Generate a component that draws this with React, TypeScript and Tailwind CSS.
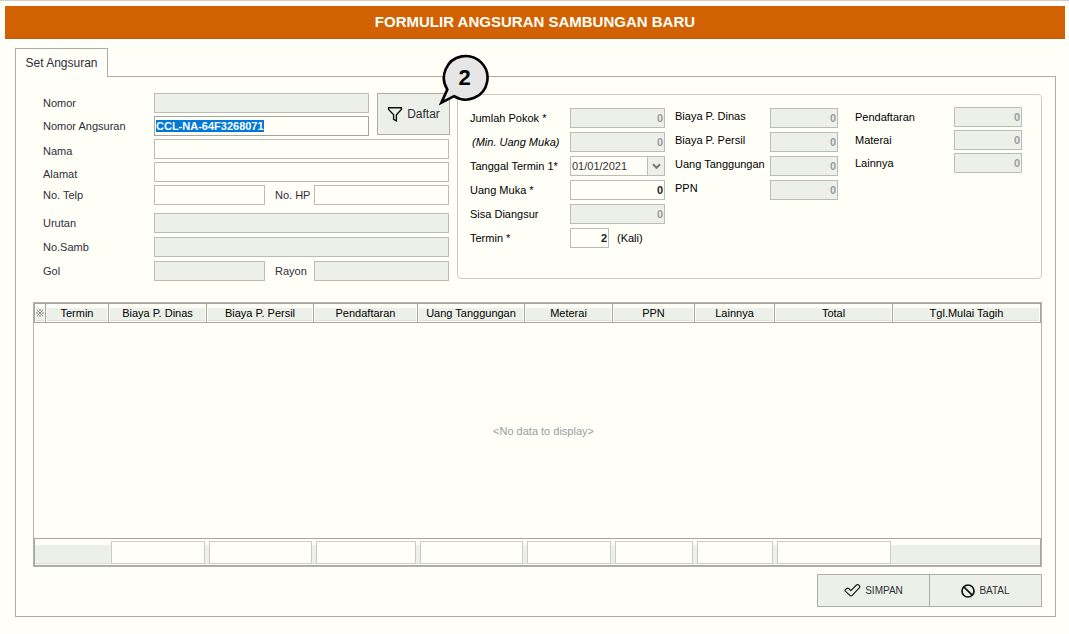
import { useEffect, useRef } from "react";
import type { ReactNode } from "react";
import clsx from "clsx";

const BOX = "block h-5 w-full min-w-0 rounded-none border px-px text-[11px] leading-4 font-bold outline-none";
const OPEN = "border-[#b9bdb5] bg-[#fffff8] text-[#222]";
const LOCKED = "border-[#b9bdb5] bg-[#edf0e8] text-[#9c9aa4]";

type FieldProps = {
  id: string;
  label: ReactNode;
  value?: string;
  locked?: boolean;
  numeric?: boolean;
  labelClass?: string;
  boxClass?: string;
};

function Field({ id, label, value = "", locked, numeric, labelClass, boxClass }: FieldProps) {
  return (
    <>
      <label htmlFor={id} className={clsx("whitespace-nowrap", labelClass ?? "self-center")}>
        {label}
      </label>
      <input
        id={id}
        type="text"
        defaultValue={value}
        disabled={locked}
        className={clsx(BOX, locked ? LOCKED : OPEN, numeric && "text-right", boxClass)}
      />
    </>
  );
}

function FunnelIcon() {
  return (
    <svg width="16" height="16" viewBox="0 0 16 16" fill="none" stroke="#111" strokeWidth="1.4" strokeLinejoin="miter" aria-hidden="true">
      <path d="M1 1.7h14M1.6 2v1.4l5 5.3v4.6l2.8 1.5V8.7l5-5.3V2" />
    </svg>
  );
}

function CheckIcon() {
  return (
    <svg width="17" height="15" viewBox="0 0 17 15" fill="none" stroke="#111" strokeWidth="1.1" strokeLinejoin="round" aria-hidden="true">
      <path d="M1.3 6.7 2.7 5.5a1.5 1.5 0 0 1 2 0L6.8 7.6 12.5 2a1.7 1.7 0 0 1 2.2 0l.8.8a1.2 1.2 0 0 1 0 1.8L8.2 12.3a1.7 1.7 0 0 1-2.3 0L1.3 8.2a1 1 0 0 1 0-1.5Z" />
    </svg>
  );
}

function BanIcon() {
  return (
    <svg width="14" height="14" viewBox="0 0 14 14" fill="none" stroke="#111" strokeWidth="1.7" aria-hidden="true">
      <circle cx="7" cy="7" r="6" />
      <path d="M2.8 2.8l8.4 8.4" />
    </svg>
  );
}

function Callout({ children }: { children: ReactNode }) {
  return (
    <span className="pointer-events-none absolute -top-10 left-[61px] block h-[53px] w-[53px]">
      <svg width="53" height="53" viewBox="0 0 53 53" fill="#e6e6e6" stroke="#000" strokeWidth="2.6" aria-hidden="true">
        <path d="M9.3 36.5A21.8 21.8 0 1 1 16 43.2L3.4 49.6Z" />
      </svg>
      <span className="absolute inset-x-0 top-0 flex h-[50px] items-center justify-center text-[22px] font-bold text-black">
        {children}
      </span>
    </span>
  );
}

const COLUMNS = [
  { name: "Termin", width: "w-[63px]", sum: false },
  { name: "Biaya P. Dinas", width: "w-[98px]", sum: true },
  { name: "Biaya P. Persil", width: "w-[107px]", sum: true },
  { name: "Pendaftaran", width: "w-[104px]", sum: true },
  { name: "Uang Tanggungan", width: "w-[107px]", sum: true },
  { name: "Meterai", width: "w-[88px]", sum: true },
  { name: "PPN", width: "w-[82px]", sum: true },
  { name: "Lainnya", width: "w-[80px]", sum: true },
  { name: "Total", width: "w-[118px]", sum: true },
  { name: "Tgl.Mulai Tagih", width: "", sum: false },
];

const HEAD_CELL =
  "flex h-[17px] items-center justify-center bg-[linear-gradient(to_bottom,#fffff8_4px,#edf0e8_4px,#edf0e8_calc(100%-1px),#dcdfd6_calc(100%-1px))]";

function InstallmentTable() {
  return (
    <table className="mt-[21px] w-full table-fixed border-separate border-spacing-0 border border-[#b0b4ac] text-[11px] leading-4 text-black">
      <colgroup>
        <col className="w-3" />
        {COLUMNS.map((c) => (
          <col key={c.name} className={c.width} />
        ))}
      </colgroup>
      <thead>
        <tr>
          <th className="border-y border-r border-l border-[#a3a79f] p-px pt-0">
            <div className={HEAD_CELL}>
              <svg width="8" height="8" viewBox="0 0 8 8" stroke="#777" strokeWidth="0.9" aria-hidden="true">
                <path d="M1 1l6 6M7 1L1 7M4 0v2M4 6v2M0 4h2M6 4h2" />
              </svg>
            </div>
          </th>
          {COLUMNS.map((c) => (
            <th key={c.name} scope="col" className="border-y border-r border-[#a3a79f] p-px pt-0 font-normal whitespace-nowrap">
              <div className={HEAD_CELL}>{c.name}</div>
            </th>
          ))}
        </tr>
      </thead>
      <tbody>
        <tr>
          <td className="p-0" />
          <td colSpan={10} className="h-[215px] p-0 text-center text-[#9b9ba0]">
            &lt;No data to display&gt;
          </td>
        </tr>
      </tbody>
      <tfoot>
        <tr className="bg-[linear-gradient(to_bottom,#fffff8_7px,#edf0e8_7px,#edf0e8_25px,#dcdfd6_25px,#dcdfd6_26px,#fffff8_26px)]">
          <td className="border-y border-l border-[#a3a79f] p-0" />
          {COLUMNS.map((c, i) => (
            <td
              key={c.name}
              className={clsx("h-7 border-y border-[#a3a79f] p-0 px-0.5", i === COLUMNS.length - 1 && "border-r")}
            >
              {c.sum && <div className="h-[23px] border border-[#c9cdc5] bg-[#fffff8]" />}
            </td>
          ))}
        </tr>
      </tfoot>
    </table>
  );
}

export default function App() {
  const codeRef = useRef<HTMLInputElement>(null);

  useEffect(() => {
    codeRef.current?.focus();
    codeRef.current?.select();
  }, []);

  return (
    <main className="min-h-screen border-t border-[#ccd0c8] bg-[#fffff8] pt-[5px] pb-[17px] font-['Liberation_Sans',Arial,sans-serif] text-[11px] leading-4 text-[#2e2e38]">
      <header className="mr-1 ml-[5px] flex h-[33px] items-center justify-center border-b border-[#b85c14] bg-[#d26103]">
        <h1 className="text-[15px] leading-5 font-bold text-[#fffff8]">FORMULIR ANGSURAN SAMBUNGAN BARU</h1>
      </header>

      <div className="mt-[9px] mr-[13px] ml-[15px]">
        <div role="tablist" className="flex">
          <button
            type="button"
            role="tab"
            aria-selected="true"
            className="relative -mb-px flex h-[29px] w-[93px] items-center justify-center border-x border-t border-[#a9ada5] bg-[#fffff8] text-xs"
          >
            Set Angsuran
          </button>
        </div>

        <form className="border border-[#a9ada5] pt-4 pr-[13px] pb-[9px] pl-[17px]" onSubmit={(e) => e.preventDefault()}>
          <div className="flex items-start gap-2">
            <div className="w-[416px] shrink-0 pl-[10px]">
              <div className="flex gap-2">
                <div className="grid grid-cols-[111px_215px] gap-y-[3px]">
                  <Field id="nomor" label="Nomor" locked />
                  <label htmlFor="nomor-angsuran" className="self-center">
                    Nomor Angsuran
                  </label>
                  <input
                    id="nomor-angsuran"
                    ref={codeRef}
                    type="text"
                    defaultValue="CCL-NA-64F3268071"
                    className="block h-5 w-full rounded-none border border-[#a3a79f] bg-[#fffff8] px-px text-[11px] leading-4 font-bold outline-none selection:bg-[#0078d7] selection:text-white"
                  />
                </div>
                <div className="relative">
                  <button
                    type="button"
                    className="flex h-[42px] w-[73px] items-center justify-center gap-1 border border-[#a9ada5] bg-[#edf0e8] text-xs"
                  >
                    <FunnelIcon />
                    Daftar
                  </button>
                  <Callout>2</Callout>
                </div>
              </div>

              <div className="mt-[3px] grid grid-cols-[111px_295px] gap-y-[3px]">
                <Field id="nama" label="Nama" labelClass="self-end" />
                <Field id="alamat" label="Alamat" labelClass="self-end" />
              </div>
              <div className="mt-[3px] grid grid-cols-[111px_111px_10px_39px_135px]">
                <Field id="telp" label="No. Telp" />
                <span />
                <Field id="hp" label="No. HP" />
              </div>
              <div className="mt-2 grid grid-cols-[111px_295px] gap-y-1">
                <Field id="urutan" label="Urutan" locked />
                <Field id="samb" label="No.Samb" locked />
              </div>
              <div className="mt-1 grid grid-cols-[111px_111px_10px_39px_135px]">
                <Field id="gol" label="Gol" locked />
                <span />
                <Field id="rayon" label="Rayon" locked />
              </div>
            </div>

            <fieldset className="mt-px flex min-w-0 flex-1 items-start rounded-[4px] border border-[#c9cdc5] pt-3 pb-[30px] pl-3 text-black">
              <div className="mt-px grid grid-cols-[100px_95px] gap-y-1">
                <Field id="pokok" label="Jumlah Pokok *" value="0" locked numeric />
                <Field
                  id="min-muka"
                  label={<em>(Min. Uang Muka)</em>}
                  labelClass="self-center pl-0.5"
                  value="0"
                  locked
                  numeric
                />
                <label htmlFor="tanggal" className="self-center">
                  Tanggal Termin 1*
                </label>
                <div className="relative">
                  <select
                    id="tanggal"
                    className="block h-5 w-full appearance-none rounded-none border border-[#b9bdb5] bg-[#fffff8] pr-5 pl-px text-[11px] leading-4 text-[#333] outline-none"
                  >
                    <option>01/01/2021</option>
                  </select>
                  <span className="pointer-events-none absolute inset-y-px right-px flex w-[17px] items-center justify-center border-l border-[#b9bdb5] bg-[#edf0e8]">
                    <svg width="9" height="7" viewBox="0 0 9 7" fill="none" stroke="#777b74" strokeWidth="2" aria-hidden="true">
                      <path d="M1 1.2l3.5 3.6L8 1.2" />
                    </svg>
                  </span>
                </div>
                <Field id="muka" label="Uang Muka *" value="0" numeric />
                <Field id="sisa" label="Sisa Diangsur" value="0" locked numeric />
                <label htmlFor="termin" className="self-center">
                  Termin *
                </label>
                <div className="flex items-center gap-2">
                  <input id="termin" type="text" defaultValue="2" className={clsx(BOX, OPEN, "max-w-[39px] text-right")} />
                  <span>(Kali)</span>
                </div>
              </div>

              <div className="mt-px ml-[10px] grid grid-cols-[95px_68px] gap-y-1">
                <Field id="dinas" label="Biaya P. Dinas" labelClass="self-start" value="0" locked numeric />
                <Field id="persil" label="Biaya P. Persil" labelClass="self-start" value="0" locked numeric />
                <Field id="tanggungan" label="Uang Tanggungan" labelClass="self-start" value="0" locked numeric />
                <Field id="ppn" label="PPN" labelClass="self-start" value="0" locked numeric />
              </div>

              <div className="ml-[17px] grid grid-cols-[99px_68px] gap-y-[3px]">
                <Field id="pendaftaran" label="Pendaftaran" value="0" locked numeric />
                <Field id="materai" label="Materai" value="0" locked numeric />
                <Field id="lainnya" label="Lainnya" value="0" locked numeric />
              </div>
            </fieldset>
          </div>

          <InstallmentTable />

          <div className="mt-[7px] flex justify-end text-[10px]">
            <button
              type="submit"
              className="flex h-[33px] w-[113px] items-center justify-center gap-1 border border-[#a9ada5] bg-[#edf0e8]"
            >
              <CheckIcon />
              SIMPAN
            </button>
            <button
              type="button"
              className="flex h-[33px] w-28 items-center justify-center gap-1 border-y border-r border-[#a9ada5] bg-[#edf0e8]"
            >
              <BanIcon />
              BATAL
            </button>
          </div>
        </form>
      </div>
    </main>
  );
}
